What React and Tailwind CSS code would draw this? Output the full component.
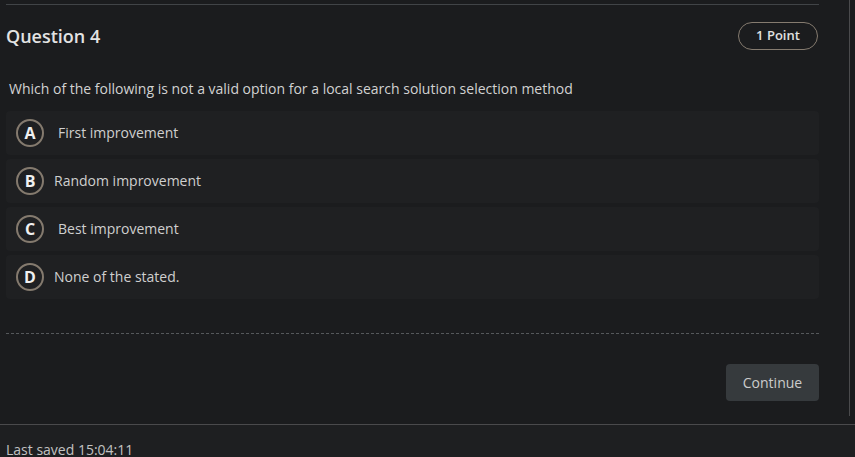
import React from 'react';

const OPTIONS = [
    { key: 'A', label: 'First improvement', gap: 'ml-[14px]' },
    { key: 'B', label: 'Random improvement', gap: 'ml-[10px]' },
    { key: 'C', label: 'Best improvement', gap: 'ml-[14px]' },
    { key: 'D', label: 'None of the stated.', gap: 'ml-[10px]' },
];

const OptionRow = ({ option }) => (
    <div className="flex h-[44px] items-center rounded-sm bg-[#1f2022] pl-[10px]">
        <div className="flex h-[28px] w-[28px] items-center justify-center rounded-full border-2 border-[#847a6e] text-[16px] font-bold leading-none text-[#f0f0f0]">
            {option.key}
        </div>
        <span className={`${option.gap} -mt-[1px] text-[14px] text-[#cfcfcf]`}>{option.label}</span>
    </div>
);

export default function App() {
    return (
        <div className="h-[457px] w-[855px] overflow-hidden bg-[#1b1c1e] font-['Open_Sans',sans-serif]">
            <div className="h-[425px] border-b border-[#4a4a4c]">
                <div className="h-[416px] w-[850px] border-r border-[#4a4a4c]">
                    <div className="ml-[6px] w-[813px] pt-[4px]">
                        <div className="border-t border-[#414447]">
                            <div className="flex h-[45px] items-end justify-between">
                                <h2 className="text-[18px] font-semibold text-[#e3e3e3]">Question 4</h2>
                                <div className="mr-[1px] flex h-[28px] w-[80px] items-center justify-center rounded-full border border-[#857b6f] text-[13px] font-semibold text-[#e0e0e0]">
                                    1 Point
                                </div>
                            </div>
                            <p className="ml-[3px] mt-[29px] text-[14px] leading-[20px] text-[#d2d2d2]">
                                Which of the following is not a valid option for a local search solution selection method
                            </p>
                            <div className="mt-[12px] flex flex-col gap-[4px]">
                                {OPTIONS.map(o => (
                                    <OptionRow key={o.key} option={o} />
                                ))}
                            </div>
                            <div className="mt-[34px] border-t border-dashed border-[#55585b]" />
                            <div className="mt-[30px] flex justify-end">
                                <button className="h-[37px] w-[93px] rounded-sm bg-[#363a3d] text-[14px] text-[#cccccc]">
                                    Continue
                                </button>
                            </div>
                        </div>
                    </div>
                </div>
            </div>
            <div className="h-[32px] bg-[#1e1f21] pl-[6px] pt-[15px] text-[14px] leading-[20px] text-[#c2c2c2]">
                Last saved 15:04:11
            </div>
        </div>
    );
}
